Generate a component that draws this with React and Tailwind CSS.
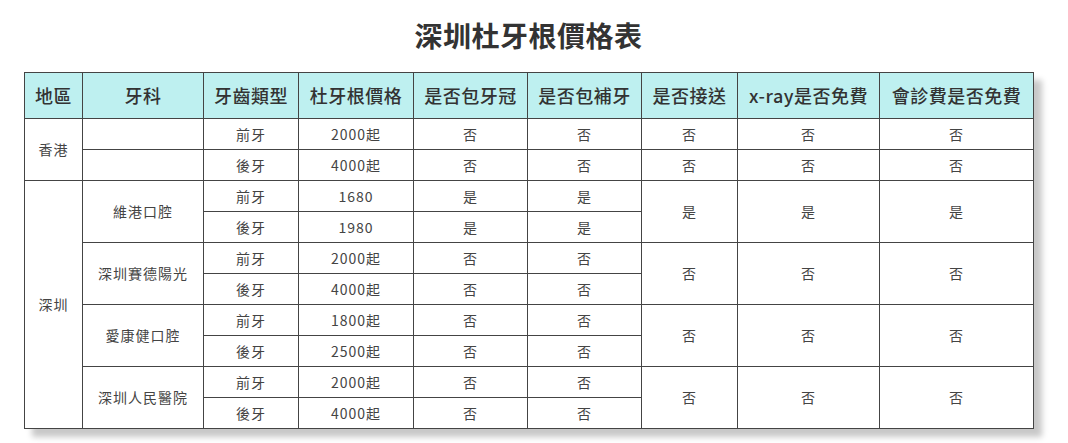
import React from "react";

const cols = [58, 121, 95, 115, 114, 114, 96, 142, 154];
const headers = ["地區", "牙科", "牙齒類型", "杜牙根價格", "是否包牙冠", "是否包補牙", "是否接送", "x-ray是否免費", "會診費是否免費"];

const clinics = [
  { name: "維港口腔", rows: [["前牙", "1680", "是", "是"], ["後牙", "1980", "是", "是"]], extra: ["是", "是", "是"] },
  { name: "深圳賽德陽光", rows: [["前牙", "2000起", "否", "否"], ["後牙", "4000起", "否", "否"]], extra: ["否", "否", "否"] },
  { name: "愛康健口腔", rows: [["前牙", "1800起", "否", "否"], ["後牙", "2500起", "否", "否"]], extra: ["否", "否", "否"] },
  { name: "深圳人民醫院", rows: [["前牙", "2000起", "否", "否"], ["後牙", "4000起", "否", "否"]], extra: ["否", "否", "否"] },
];

const td = "border border-[#444] text-center align-middle h-[31px] p-0";

export default function App() {
  return (
    <div className="w-[1068px] h-[443px] bg-white overflow-hidden" style={{ fontFamily: '"Noto Sans CJK TC", "Noto Sans", sans-serif' }}>
      <div className="ml-[24px] w-[1009px] pt-[15px]">
        <h1 className="text-center text-[28px] font-bold text-[#333] leading-[40px] mb-[17px] tracking-[0.5px]">深圳杜牙根價格表</h1>
        <table className="border-collapse table-fixed w-[1009px] text-[14px] tracking-[1px] text-[#444] shadow-[8px_8px_6px_#c8c8c8]">
          <colgroup>
            {cols.map((w, i) => <col key={i} style={{ width: w }} />)}
          </colgroup>
          <thead>
            <tr className="bg-[#bef0f0]">
              {headers.map((h) => (
                <th key={h} className="border border-[#444] h-[46px] p-0 text-[18px] tracking-[0.5px] font-medium text-[#333] text-center whitespace-nowrap">{h}</th>
              ))}
            </tr>
          </thead>
          <tbody>
            <tr>
              <td rowSpan={2} className={td}>香港</td>
              <td className={td}></td>
              <td className={td}>前牙</td>
              <td className={td}>2000起</td>
              <td className={td}>否</td>
              <td className={td}>否</td>
              <td className={td}>否</td>
              <td className={td}>否</td>
              <td className={td}>否</td>
            </tr>
            <tr>
              <td className={td}></td>
              <td className={td}>後牙</td>
              <td className={td}>4000起</td>
              <td className={td}>否</td>
              <td className={td}>否</td>
              <td className={td}>否</td>
              <td className={td}>否</td>
              <td className={td}>否</td>
            </tr>
            {clinics.map((c, ci) =>
              c.rows.map((r, ri) => (
                <tr key={c.name + ri}>
                  {ci === 0 && ri === 0 && <td rowSpan={8} className={td}>深圳</td>}
                  {ri === 0 && <td rowSpan={2} className={td}>{c.name}</td>}
                  {r.map((v, vi) => <td key={vi} className={td}>{v}</td>)}
                  {ri === 0 && c.extra.map((v, vi) => <td key={"e" + vi} rowSpan={2} className={td}>{v}</td>)}
                </tr>
              ))
            )}
          </tbody>
        </table>
      </div>
    </div>
  );
}
